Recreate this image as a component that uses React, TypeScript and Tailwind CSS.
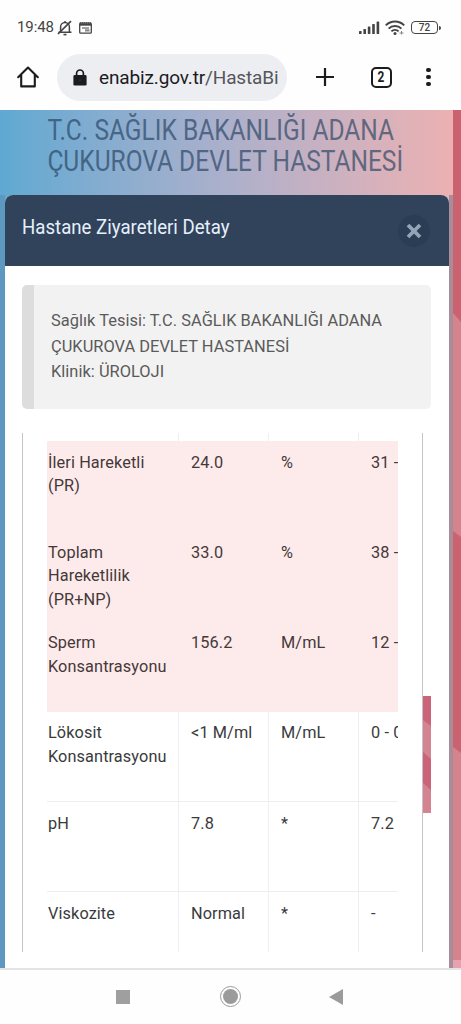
import { X } from 'lucide-react';

type Sonuc = {
  islem: string;
  sonuc: string;
  birim: string;
  referans: string;
  riskli?: boolean;
};

const sonuclar: Sonuc[] = [
  { islem: 'İleri Hareketli (PR)', sonuc: '24.0', birim: '%', referans: '31 -', riskli: true },
  { islem: 'Toplam Hareketlilik (PR+NP)', sonuc: '33.0', birim: '%', referans: '38 -', riskli: true },
  { islem: 'Sperm Konsantrasyonu', sonuc: '156.2', birim: 'M/mL', referans: '12 -', riskli: true },
  { islem: 'Lökosit Konsantrasyonu', sonuc: '<1 M/ml', birim: 'M/mL', referans: '0 - 0' },
  { islem: 'pH', sonuc: '7.8', birim: '*', referans: '7.2' },
  { islem: 'Viskozite', sonuc: 'Normal', birim: '*', referans: '-' },
];

function StatusBar() {
  return (
    <div className="flex h-[44px] items-center justify-between pl-[17px] pr-[20px] pt-[11px] text-[#444]">
      <div className="flex items-center">
        <span className="w-[37px] text-[15px] leading-none tracking-[-0.1px]">19:48</span>
        <svg width="16" height="16" viewBox="0 0 16 16" className="ml-[3px]" fill="none" stroke="#444" strokeWidth="1.5">
          <path d="M3.6 12V7a4.4 4.4 0 0 1 8.8 0v5M1.5 12.3h13M8 1v1.8" />
          <path d="M6.5 14.6h3" strokeWidth="1.6" />
          <path d="M1 14 14 1.2" strokeWidth="1.7" />
        </svg>
        <svg width="13" height="12" viewBox="0 0 13 12" className="ml-[6px]" fill="none" stroke="#444">
          <rect x="0.7" y="1.2" width="11.6" height="10" rx="1" strokeWidth="1.3" />
          <path d="M0.7 1h11.6" strokeWidth="1.4" strokeDasharray="1.4 0.6" />
          <path d="M1 2.8h11" strokeWidth="1.8" />
          <path d="M3 6h7" strokeWidth="1" />
          <path d="M6 8.4h4.5" strokeWidth="2.2" stroke="#888" />
        </svg>
      </div>
      <div className="flex items-center">
        <svg width="21" height="13" viewBox="0 0 21 13" fill="#444">
          <rect x="0" y="10" width="2.6" height="3" rx="0.6" />
          <rect x="4.4" y="8" width="2.6" height="5" rx="0.6" />
          <rect x="8.8" y="5.5" width="2.6" height="7.5" rx="0.6" />
          <rect x="13.2" y="3" width="2.6" height="10" rx="0.6" />
          <rect x="17.6" y="0.5" width="2.6" height="12.5" rx="0.6" />
        </svg>
        <svg width="20" height="15" viewBox="0 0 20 15" className="ml-[5px]" fill="none" stroke="#444" strokeWidth="2">
          <path d="M0.8 5.4a13 13 0 0 1 18.4 0M3.6 8.6a9 9 0 0 1 12.8 0M6.4 11.4a5.2 5.2 0 0 1 7.2 0" />
          <circle cx="10" cy="13.4" r="1.5" fill="#444" stroke="none" />
          <path d="M14.5 13h4M16.5 11v3.5" stroke="#888" strokeWidth="1" />
        </svg>
        <div className="ml-[6px] flex h-[13px] w-[27px] items-center justify-center rounded-[4px] border-[1.5px] border-[#444] text-[10px] font-medium leading-none">
          72
        </div>
        <div className="ml-px h-[4px] w-[2px] rounded-r bg-[#444]" />
      </div>
    </div>
  );
}

function Toolbar() {
  return (
    <div className="flex h-[66px] items-center pl-[17px] text-[#1c1c1e]">
      <svg width="22" height="22" viewBox="0 0 22 22" fill="none" stroke="currentColor" strokeWidth="2.1" strokeLinejoin="round" strokeLinecap="round">
        <path d="M1.2 11.2 11 1.6l9.8 9.6M4.2 9v11.4h13.6V9" />
      </svg>
      <div className="ml-[18px] flex h-[47px] w-[230px] items-center overflow-hidden rounded-full bg-[#edeef2] pl-[16px]">
        <svg width="14" height="17" viewBox="0 0 14 17" className="shrink-0">
          <path d="M3.6 6V4.4a3.4 3.4 0 0 1 6.8 0V6" fill="none" stroke="#1c1c1e" strokeWidth="1.7" />
          <rect x="0.4" y="6" width="13.2" height="10.6" rx="1.4" fill="#1c1c1e" />
          <circle cx="7" cy="11.3" r="0.8" fill="#3c3c3e" />
        </svg>
        <span className="ml-[12px] whitespace-nowrap text-[19px] leading-none tracking-[-0.14px]">
          enabiz.gov.tr<span className="text-[#55565a]">/HastaBi</span>
        </span>
      </div>
      <svg width="20" height="20" viewBox="0 0 20 20" className="ml-[28px]" stroke="currentColor" strokeWidth="2.2">
        <path d="M1 10h18M10 1v18" />
      </svg>
      <div className="ml-[36px] flex size-[21px] items-center justify-center rounded-[5px] border-2 border-current text-[14px] font-bold leading-none">
        <span className="scale-x-[0.85]">2</span>
      </div>
      <div className="ml-[34px] flex flex-col gap-[2.5px]">
        <span className="size-[4.6px] rounded-full bg-current" />
        <span className="size-[4.6px] rounded-full bg-current" />
        <span className="size-[4.6px] rounded-full bg-current" />
      </div>
    </div>
  );
}

function SonucTablosu() {
  return (
    <div className="ml-[17px] mt-[24px] h-[519px] w-[401px] overflow-hidden border-x border-[#c4c4c6] pl-[24px]">
      <div className="h-full w-[351px] overflow-hidden">
        <div className="flex h-[8px]">
          <div className="w-[132px] border-r border-[#efeff1]" />
          <div className="w-[90px] border-r border-[#efeff1]" />
          <div className="w-[90px] border-r border-[#efeff1]" />
        </div>
        {sonuclar.map((s) => (
          <div
            key={s.islem}
            className={`flex h-[90.3px] w-[420px] text-[16.3px] leading-[23.6px] tracking-[0.1px] ${
              s.riskli ? 'bg-[#fdebec] text-[#453838]' : 'border-b border-[#eeeeef] text-[#3a3a3c]'
            }`}
          >
            <div className={`w-[132px] shrink-0 pl-[1px] pr-[10px] pt-[9.6px] ${s.riskli ? '' : 'border-r border-[#efeff1]'}`}>
              {s.islem}
            </div>
            <div className={`w-[90px] shrink-0 whitespace-nowrap pl-[12px] pt-[9.6px] ${s.riskli ? '' : 'border-r border-[#efeff1]'}`}>
              {s.sonuc}
            </div>
            <div className={`w-[90px] shrink-0 pl-[12px] pt-[9.6px] ${s.riskli ? '' : 'border-r border-[#efeff1]'}`}>
              {s.birim}
            </div>
            <div className="shrink-0 whitespace-nowrap pl-[12px] pt-[9.6px]">{s.referans}</div>
          </div>
        ))}
      </div>
    </div>
  );
}

export default function App() {
  return (
    <div className="flex h-[1024px] w-[461px] flex-col overflow-hidden bg-[#fefefe] font-['Roboto',sans-serif]">
      <StatusBar />
      <Toolbar />

      <div className="flex h-[858px] bg-linear-to-r from-[#5ea9d3] via-[#adb0cb] to-[#eeb1b1]">
        <div className="relative w-[453px] shrink-0">
          <h1 className="h-[85px] origin-left scale-x-[0.846] whitespace-nowrap pl-[56px] pt-[5px] text-[29px] leading-[31px] text-[#24405f] opacity-65">
            T.C. SAĞLIK BAKANLIĞI ADANA
            <br />
            ÇUKUROVA DEVLET HASTANESİ
          </h1>

          <div className="flex h-[773px]">
            <div className="w-[5px] bg-[#5c98bf]" />
            <div className="w-[444px] overflow-hidden rounded-t-[8px] bg-white">
              <div className="flex h-[71px] items-center justify-between bg-[#30435b] pl-[17px] pr-[19px]">
                <h2 className="w-[212px] origin-left scale-x-[0.887] whitespace-nowrap pb-[6px] text-[21px] text-[#e6f0fc]">
                  Hastane Ziyaretleri Detay
                </h2>
                <button className="flex size-[32px] items-center justify-center rounded-full bg-[#2a3d55] text-[#92a6b7]">
                  <X size={24} strokeWidth={3.8} strokeLinecap="butt" />
                </button>
              </div>

              <div className="ml-[17px] mt-[19px] h-[124px] w-[409px] whitespace-nowrap rounded-[5px] border-l-[12px] border-[#dddddd] bg-[#f2f2f2] pl-[17px] pt-[23px] text-[16.4px] leading-[25.6px] tracking-[0.03px] text-[#5a5a5a]">
                Sağlık Tesisi: T.C. SAĞLIK BAKANLIĞI ADANA
                <br />
                ÇUKUROVA DEVLET HASTANESİ
                <br />
                Klinik: ÜROLOJI
              </div>

              <SonucTablosu />
            </div>
            <div className="w-[4px] bg-[#a98c99]" />
          </div>

          {/* sayfa arka planının modal üzerinde görünen parçası */}
          <svg width="8" height="117" viewBox="0 0 8 117" className="absolute left-[423px] top-[586px]">
            <rect width="8" height="117" fill="#d48391" />
            <path d="M0 0h8v30L0 24zM0 56l8 7v31l-8-7z" fill="#cb6478" />
          </svg>
        </div>

        <svg width="8" height="858" viewBox="0 0 8 858" className="shrink-0">
          <rect width="8" height="858" fill="#d5838d" />
          <path d="M0 0h8v212l-8-9zM0 421l8 6v216l-8-6z" fill="#ca636f" />
          <rect y="850" width="8" height="8" fill="#e8a1b1" />
        </svg>
      </div>

      <div className="flex h-[56px] items-center border-t-2 border-[#e4e4e6] pb-px pl-[116px] text-[#9b9b9b]">
        <div className="size-[14px] bg-[#9f9f9f]" />
        <div className="ml-[90px] flex size-[21px] items-center justify-center rounded-full border-[1.5px] border-current">
          <div className="size-[15px] rounded-full bg-current" />
        </div>
        <svg width="14" height="16" viewBox="0 0 14 16" className="ml-[88px]" fill="currentColor">
          <path d="M0 8 14 0v16z" />
        </svg>
      </div>
    </div>
  );
}
